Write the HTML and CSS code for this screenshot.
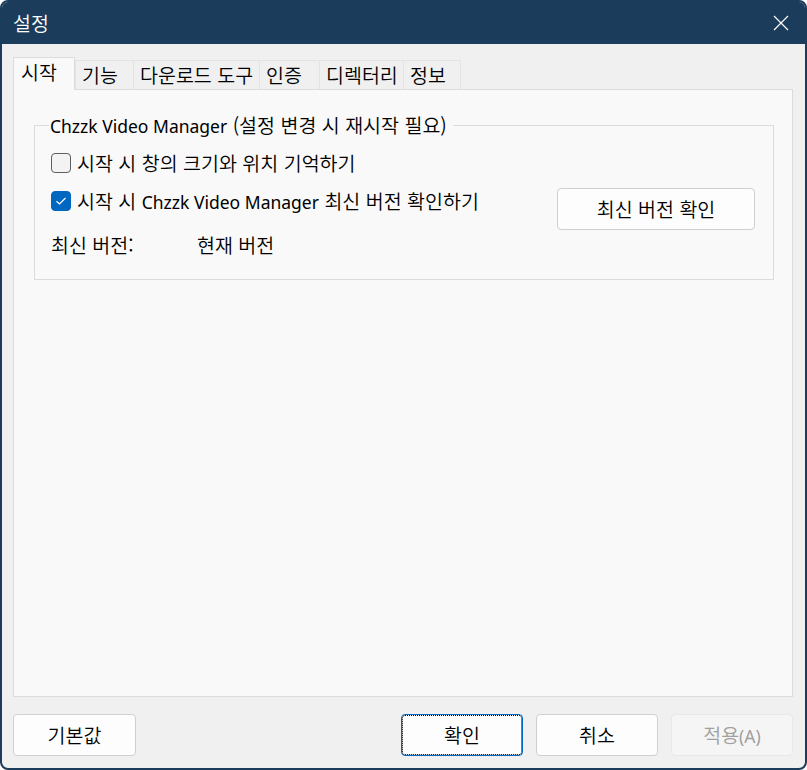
FILE: index.html
```html
<!DOCTYPE html>
<html lang="ko">
<head>
<meta charset="utf-8">
<title>설정</title>
<link rel="stylesheet" href="styles.css">
</head>
<body>
<div class="window">
  <div class="titlebar">
    <span class="title">설정</span>
    <span class="close">
      <svg width="16" height="16" viewBox="0 0 16 16"><path d="M1 1 L15 15 M15 1 L1 15" stroke="#ffffff" stroke-width="1.2" fill="none"/></svg>
    </span>
  </div>
  <div class="content">
    <div class="tabs">
      <div class="tab active t1">시작</div>
      <div class="tab t2">기능</div>
      <div class="tab t3">다운로드 도구</div>
      <div class="tab t4">인증</div>
      <div class="tab t5">디렉터리</div>
      <div class="tab t6 last">정보</div>
    </div>
    <div class="panel">
      <fieldset class="group">
        <legend><span class="lat">Chzzk Video Manager</span> (설정 변경 시 재시작 필요)</legend>
        <div class="group-grid">
          <div class="rows">
            <label class="row check"><span class="box"></span><span>시작 시 창의 크기와 위치 기억하기</span></label>
            <label class="row check"><span class="box checked"><svg width="12" height="10" viewBox="0 0 12 10"><path d="M1.5 5.2 L4.5 8 L10.5 2" stroke="#ffffff" stroke-width="1.2" fill="none"/></svg></span><span>시작 시 <span class="lat">Chzzk Video Manager</span> 최신 버전 확인하기</span></label>
            <div class="row info"><span class="info-label">최신 버전:</span><span>현재 버전</span></div>
          </div>
          <button class="btn check-btn">최신 버전 확인</button>
        </div>
      </fieldset>
    </div>
    <div class="footer">
      <button class="btn first">기본값</button>
      <div class="spacer"></div>
      <button class="btn focused">확인</button>
      <button class="btn">취소</button>
      <button class="btn disabled">적용<span class="lat">(A)</span></button>
    </div>
  </div>
</div>
</body>
</html>
```

FILE: styles.css
```css
* { box-sizing: border-box; }
html, body { margin: 0; padding: 0; background: #ffffff; }
body {
  font-family: "Noto Sans CJK KR", "Noto Sans", sans-serif;
  font-size: 19.5px;
  font-weight: 350;
  color: #000000;
}
.lat {
  font-family: "Noto Sans", "Noto Sans CJK KR", sans-serif;
  font-size: 17.5px;
  font-weight: 400;
}
.window {
  width: 807px;
  height: 770px;
  border: 2px solid #1b3c5b;
  border-radius: 8px;
  background: #f0f0f0;
  overflow: hidden;
  display: flex;
  flex-direction: column;
}
.titlebar {
  height: 42px;
  background: #1b3c5b;
  display: flex;
  align-items: center;
  justify-content: space-between;
  padding: 0 16px 0 11px;
  color: #ffffff;
}
.title { line-height: 24px; }
.close { display: flex; width: 16px; height: 16px; }
.content {
  flex: 1;
  display: flex;
  flex-direction: column;
  padding: 14px 12px 0 11px;
}
.tabs {
  display: flex;
  align-items: flex-end;
  height: 32px;
  margin-bottom: -1px;
  position: relative;
  z-index: 1;
}
.tab {
  height: 29px;
  margin-bottom: 1px;
  border-top: 1px solid #e3e3e3;
  border-left: 1px solid #e3e3e3;
  background: #f0f0f0;
  padding: 2px 0 0 6px;
  line-height: 24px;
  white-space: nowrap;
}
.tab.last { border-right: 1px solid #e3e3e3; }
.tab.active {
  height: 33px;
  margin-bottom: 0;
  background: #f9f9f9;
  border: 1px solid #dcdcdc;
  border-bottom: none;
  padding-top: 2px;
  padding-left: 7px;
}
.t1 { width: 62px; }
.t2 { width: 58px; }
.t3 { width: 126px; }
.t4 { width: 60px; }
.t5 { width: 84px; }
.t6 { width: 58px; }
.panel {
  height: 608px;
  background: #f9f9f9;
  border: 1px solid #dcdcdc;
  padding: 23px 18px 0 20px;
}
.group {
  margin: 0;
  border: 1px solid #dcdcdc;
  padding: 4px 18px 22px 16px;
  min-width: 0;
}
.group legend {
  padding: 0 6px 0 1px;
  margin-left: -2px;
  line-height: 24px;
}
.group-grid {
  display: flex;
  justify-content: space-between;
  align-items: flex-start;
}
.rows {
  display: flex;
  flex-direction: column;
  padding-top: 9px;
}
.row {
  display: flex;
  align-items: center;
  line-height: 24px;
  height: 24px;
  white-space: nowrap;
}
.rows .row + .row { margin-top: 14px; }
.rows .row.info { margin-top: 20px; }
.check { gap: 6px; }
.box {
  width: 20px;
  height: 20px;
  flex: none;
  border: 1px solid #5e5e5e;
  border-radius: 4px;
  background: #f3f3f3;
  display: flex;
  align-items: center;
  justify-content: center;
}
.box.checked {
  background: #0067c0;
  border-color: #0067c0;
}
.info-label { width: 146px; }
.btn {
  font-family: inherit;
  font-size: 19.5px;
  font-weight: 350;
  color: #000000;
  background: #fdfdfd;
  border: 1px solid #d0d0d0;
  border-radius: 4px;
  height: 42px;
  width: 122px;
  padding: 0;
  line-height: 24px;
}
.check-btn {
  width: 198px;
  margin-top: 46px;
}
.footer {
  display: flex;
  padding: 17px 0 0 0;
  gap: 13px;
}
.btn.first { width: 123px; }
.spacer { flex: 1; }
.btn.focused {
  border-color: #0067c0;
  outline: 1px dotted #000000;
  outline-offset: -2px;
}
.btn.disabled {
  background: #f5f5f5;
  border-color: #e8e8e8;
  color: #a0a0a0;
}
```
